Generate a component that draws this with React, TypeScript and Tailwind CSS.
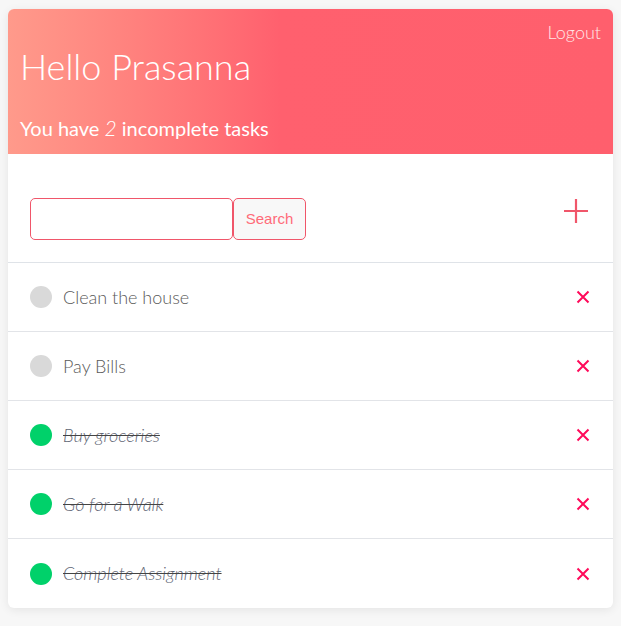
import React from "react";

const tasks = [
  { name: "Clean the house", done: false },
  { name: "Pay Bills", done: false },
  { name: "Buy groceries", done: true },
  { name: "Go for a Walk", done: true },
  { name: "Complete Assignment", done: true },
];

function XIcon() {
  return (
    <svg width="14" height="14" viewBox="0 0 14 14" fill="none">
      <path d="M1.5 1.5L12.5 12.5M12.5 1.5L1.5 12.5" stroke="#ff0a5a" strokeWidth="2" strokeLinecap="butt" />
    </svg>
  );
}

function PlusIcon() {
  return (
    <svg width="26" height="26" viewBox="0 0 26 26" fill="none">
      <path d="M13 1V25M1 13H25" stroke="#f0566a" strokeWidth="2.2" />
    </svg>
  );
}

export default function App() {
  return (
    <div className="min-h-[626px] w-full bg-[#f7f7f7] pt-[9px] pl-2" style={{ fontFamily: "Lato, 'Noto Sans', sans-serif" }}>
      <div className="w-[605px] rounded-md bg-white shadow-[0_2px_10px_rgba(0,0,0,0.08)] overflow-hidden">
        <div className="h-[145px] bg-gradient-to-r from-[#ff9a8b] via-[#ff606e] via-45% to-[#ff5f6d] px-3 flex flex-col text-white">
          <div className="flex justify-end pt-[12px]">
            <span className="text-[18px] font-light leading-[22px] text-[#ffe6e6]">Logout</span>
          </div>
          <div className="text-[36px] font-light leading-[44px] mt-[1px]">Hello Prasanna</div>
          <div className="text-[20px] font-normal leading-[26px] mt-[27px]">
            You have <em className="font-light text-white text-[21px]">2</em> incomplete tasks
          </div>
        </div>
        <div className="h-[109px] flex items-center justify-between pl-[22px] pr-[22px] border-b border-[#dfe3e8]">
          <div className="flex mt-[22px]">
            <input className="w-[203px] h-[42px] rounded-[5px] border border-[#f0566a] outline-none px-2" />
            <button className="w-[73px] h-[42px] rounded-[5px] border border-[#f0566a] bg-[#f8f8f8] text-[#ff6b78] text-[15px]" style={{ fontFamily: "'Liberation Sans', Arial, sans-serif" }}>
              Search
            </button>
          </div>
          <div className="mt-[6px] mr-[2px]">
            <PlusIcon />
          </div>
        </div>
        {tasks.map((t, i) => (
          <div
            key={t.name}
            className={`flex items-center justify-between h-[69px] pl-[22px] pr-[22px] ${i < tasks.length - 1 ? "border-b border-[#e2e4e8]" : ""}`}
          >
            <div className="flex items-center gap-[11px]">
              <span className={`w-[22px] h-[22px] rounded-full ${t.done ? "bg-[#00d16a]" : "bg-[#d9d9d9]"}`} />
              <span
                className={`text-[18px] font-light ${t.done ? "italic line-through decoration-[#444] text-[#5f6675] text-[18.5px]" : "text-[#5a5a5a]"}`}
              >
                {t.name}
              </span>
            </div>
            <div className="mr-[1px]">
              <XIcon />
            </div>
          </div>
        ))}
      </div>
    </div>
  );
}
